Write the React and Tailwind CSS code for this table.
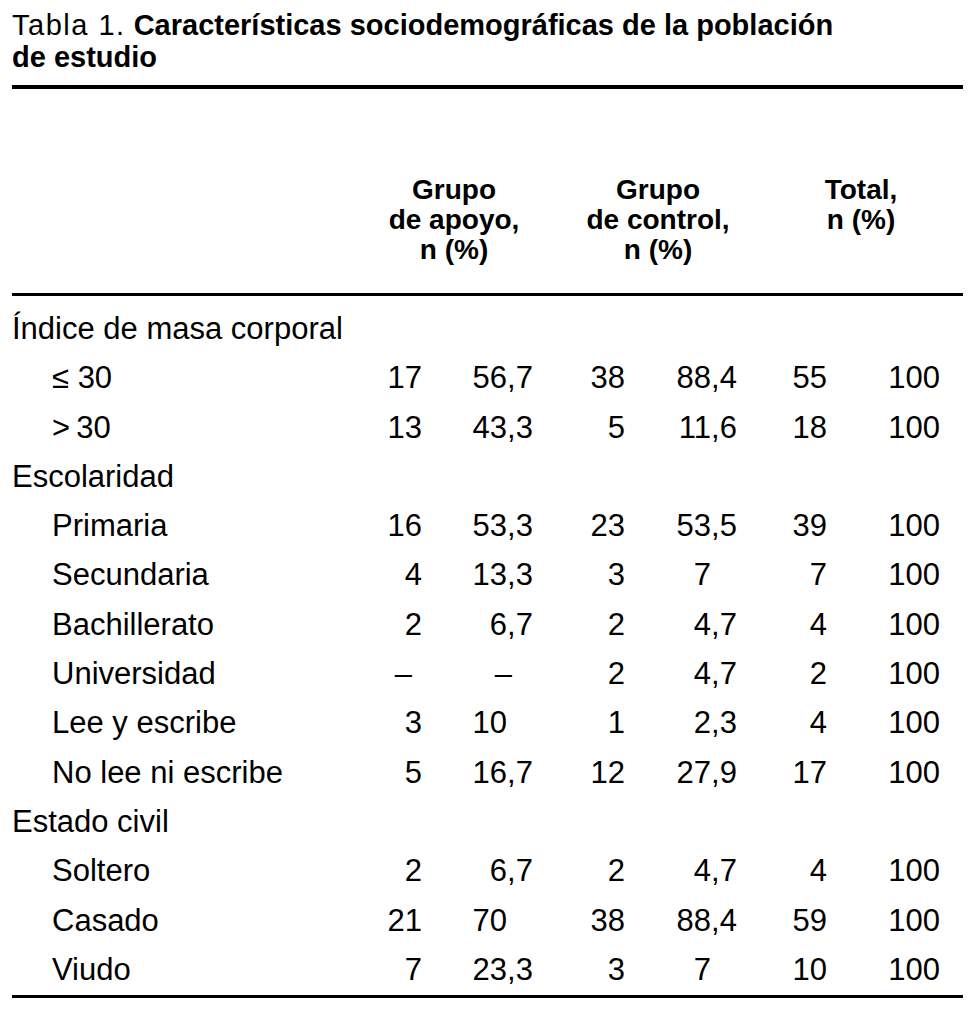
const rows = [
  { section: "Índice de masa corporal" },
  { label: "≤ 30", v: ["17", "56,7", "38", "88,4", "55", "100"] },
  { label: ">\u200930", v: ["13", "43,3", "5", "11,6", "18", "100"] },
  { section: "Escolaridad" },
  { label: "Primaria", v: ["16", "53,3", "23", "53,5", "39", "100"] },
  { label: "Secundaria", v: ["4", "13,3", "3", "7", "7", "100"] },
  { label: "Bachillerato", v: ["2", "6,7", "2", "4,7", "4", "100"] },
  { label: "Universidad", v: ["–", "–", "2", "4,7", "2", "100"] },
  { label: "Lee y escribe", v: ["3", "10", "1", "2,3", "4", "100"] },
  { label: "No lee ni escribe", v: ["5", "16,7", "12", "27,9", "17", "100"] },
  { section: "Estado civil" },
  { label: "Soltero", v: ["2", "6,7", "2", "4,7", "4", "100"] },
  { label: "Casado", v: ["21", "70", "38", "88,4", "59", "100"] },
  { label: "Viudo", v: ["7", "23,3", "3", "7", "10", "100"] },
];

// decimal-aligned cell: integer part right-aligned, fraction after the comma
const Decimal = ({ value, intWidth }) => {
  if (value === "–") {
    return (
      <div className="flex">
        <span className={intWidth === 85 ? "w-[90px] text-right" : "w-[91px] text-right"}>–</span>
      </div>
    );
  }
  const [int, frac] = value.split(",");
  return (
    <div className="flex">
      <span className={intWidth === 85 ? "w-[85px] text-right" : "w-[86px] text-right"}>{int}</span>
      {frac && <span>,{frac}</span>}
    </div>
  );
};

const Row = ({ row }) => {
  if (row.section) {
    return (
      <div className="h-[49.3px] leading-[49.3px] col-span-7">{row.section}</div>
    );
  }
  const [a, b, c, d, e, f] = row.v;
  return (
    <>
      <div className="h-[49.3px] leading-[49.3px] pl-[40px] whitespace-nowrap">{row.label}</div>
      <div className={a === "–" ? "leading-[49.3px] text-right pr-[10px]" : "leading-[49.3px] text-right"}>{a}</div>
      <div className="leading-[49.3px]">
        <Decimal value={b} intWidth={85} />
      </div>
      <div className="leading-[49.3px] text-right">{c}</div>
      <div className="leading-[49.3px]">
        <Decimal value={d} intWidth={86} />
      </div>
      <div className="leading-[49.3px] text-right">{e}</div>
      <div className="leading-[49.3px] text-right">{f}</div>
    </>
  );
};

export default function App() {
  return (
    <div className="min-h-[1018px] w-[977px] bg-white text-black font-['Liberation_Sans',Arial,sans-serif] pl-[12px]">
      <div className="w-[951px]">
        {/* caption */}
        <div className="pt-[9px] text-[29px] leading-[32px]">
          <span className="tracking-[1.5px]">Tabla 1.</span>{" "}
          <span className="font-bold">Características sociodemográficas de la población</span>
          <br />
          <span className="font-bold">de estudio</span>
        </div>
        <div className="mt-[12px] border-t-4 border-black" />

        {/* column headers */}
        <div className="flex pt-[86px] pb-[28px] text-[28px] leading-[30px] font-bold text-center">
          <div className="w-[368px]" />
          <div className="w-[148px]">
            Grupo
            <br />
            de apoyo,
            <br />
            n (%)
          </div>
          <div className="w-[260px]">
            Grupo
            <br />
            de control,
            <br />
            n (%)
          </div>
          <div className="w-[146px]">
            Total,
            <br />
            n (%)
          </div>
        </div>
        <div className="border-t-[3px] border-black" />

        {/* body */}
        <div className="grid grid-cols-[368px_42px_138px_65px_135px_67px_113px] pt-[8px] pb-[1px] text-[31px]">
          {rows.map((row, i) => (
            <Row key={i} row={row} />
          ))}
        </div>
        <div className="border-t-[3px] border-black" />
      </div>
    </div>
  );
}
